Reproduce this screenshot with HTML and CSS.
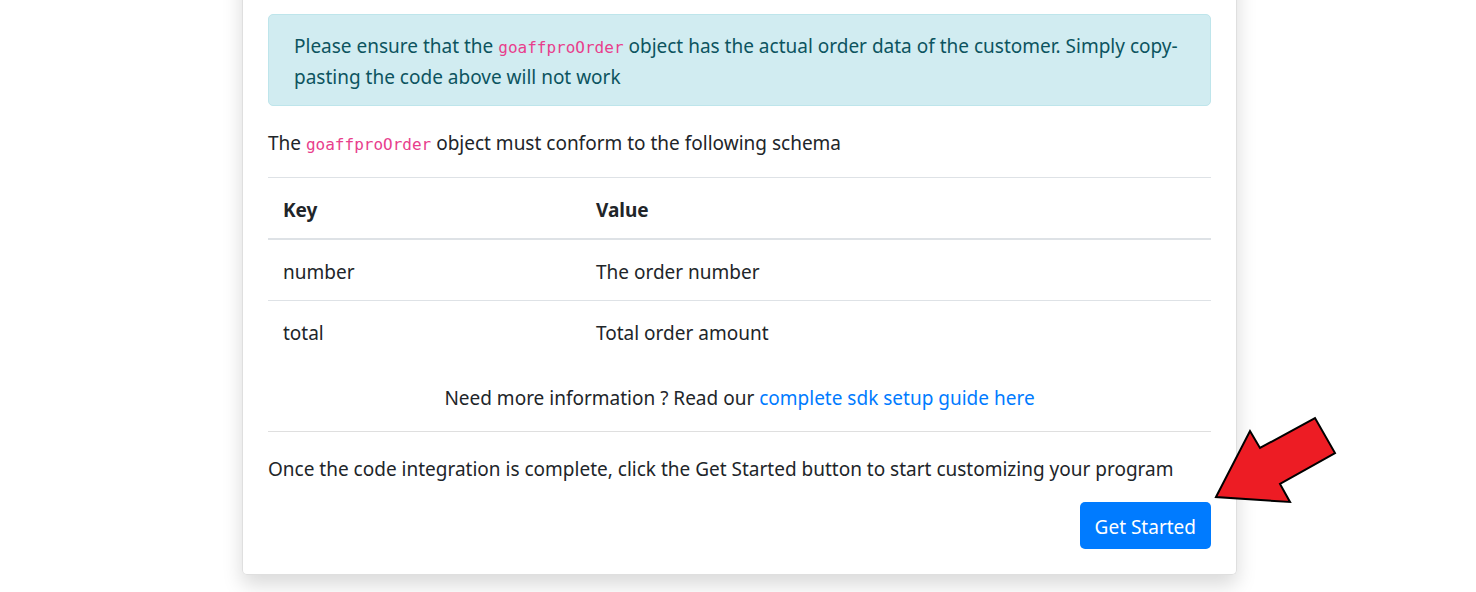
FILE: index.html
```html
<!DOCTYPE html>
<html lang="en">
<head>
<meta charset="utf-8">
<title>SDK Integration</title>
<link rel="stylesheet" href="styles.css">
</head>
<body>
<main class="page">
  <section class="card">
    <div class="alert" role="alert">Please ensure that the <code>goaffproOrder</code> object has the actual order data of the customer. Simply copy-pasting the code above will not work</div>
    <p class="intro">The <code>goaffproOrder</code> object must conform to the following schema</p>
    <table class="schema">
      <thead><tr><th scope="col" class="key">Key</th><th scope="col">Value</th></tr></thead>
      <tbody>
        <tr><td>number</td><td>The order number</td></tr>
        <tr><td>total</td><td>Total order amount</td></tr>
      </tbody>
    </table>
    <p class="more">Need more information ? Read our <a href="#guide">complete sdk setup guide here</a></p>
    <p class="closing">Once the code integration is complete, click the Get Started button to start customizing your program</p>
    <div class="actions">
      <button type="button" class="start">Get Started</button>
      <svg class="arrow" viewBox="0 0 124 90" width="124" height="90" aria-hidden="true"><path d="M3 82 37 16 47 33 102 3 122 38 67 69 77 87Z" fill="#ed1c24" stroke="#000" stroke-width="2"/></svg>
    </div>
  </section>
</main>
</body>
</html>
```
FILE: styles.css
```css
* { box-sizing: border-box; }
body {
  margin: 0;
  background: #fff;
  color: #212529;
  font-family: "Segoe UI", "Noto Sans", sans-serif;
  font-size: 19px;
  line-height: 31px;
}
p { margin: 0; }
.page { display: flex; justify-content: center; padding: 0 239px 17px 242px; }
/* The card continues above the top edge, so its side shadows stay even. */
.card {
  flex: 1;
  margin-top: -40px;
  padding: 54px 25px 25px;
  border: 1px solid #dfdfdf;
  border-top: 0;
  border-radius: 0 0 5px 5px;
  box-shadow: 0 10px 20px rgba(0, 0, 0, .15);
}
.alert {
  padding: 16px 25px 12px;
  color: #0c5460;
  background: #d1ecf1;
  border: 1px solid #bee5eb;
  border-radius: 5px;
}
code { color: #e83e8c; font: 16px/1 "DejaVu Sans Mono", monospace; }
.intro { margin: 22px 0 18px; }
.schema { width: 100%; border-collapse: collapse; table-layout: fixed; }
.schema th, .schema td { padding: 17px 15px 12px; border-top: 1px solid #dee2e6; text-align: left; }
.schema th { border-bottom: 2px solid #dee2e6; }
.schema .key { width: 313px; }
.more { padding: 22px 0 17px; text-align: center; border-bottom: 1px solid #dfdfdf; }
.more a { color: #007bff; text-decoration: none; }
.closing { margin: 22px 0 17px; }
.actions { position: relative; display: flex; justify-content: flex-end; }
.start {
  padding: 10px 15px 6px;
  color: #fff;
  background: #007bff;
  border: 0;
  border-radius: 5px;
  font: inherit;
}
.arrow { position: absolute; left: calc(100% + 2px); bottom: 44px; }
```
